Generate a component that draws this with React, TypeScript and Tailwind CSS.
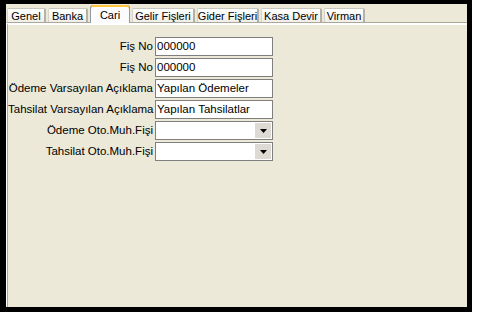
const tabs: { title: string; w: string }[] = [
  { title: "Genel", w: "w-[39px]" },
  { title: "Banka", w: "w-[40px]" },
  { title: "Cari", w: "w-[40px]" },
  { title: "Gelir Fişleri", w: "w-[63px]" },
  { title: "Gider Fişleri", w: "w-[62px]" },
  { title: "Kasa Devir", w: "w-[61px]" },
  { title: "Virman", w: "w-[41px]" },
];

const rows: { label: string; value?: string; combo?: boolean }[] = [
  { label: "Fiş No", value: "000000" },
  { label: "Fiş No", value: "000000" },
  { label: "Ödeme Varsayılan Açıklama", value: "Yapılan Ödemeler" },
  { label: "Tahsilat Varsayılan Açıklama", value: "Yapılan Tahsilatlar" },
  { label: "Ödeme Oto.Muh.Fişi", combo: true },
  { label: "Tahsilat Oto.Muh.Fişi", combo: true },
];

function Tab({ title, w, active }: { title: string; w: string; active?: boolean }) {
  if (active) {
    return (
      <div
        className={`${w} relative z-10 h-[18px] -mb-px flex items-center justify-center rounded-t-[3px] border-x border-[#919b9c] bg-[#fcfcfe] shadow-[inset_0_2px_0_#ffc83c,inset_0_1px_0_#e68b2c] pt-[2px] whitespace-nowrap text-[11px]`}
      >
        {title}
      </div>
    );
  }
  return (
    <div
      className={`${w} h-[14px] flex items-center justify-center rounded-t-[2px] border-t border-l border-t-[#c8c8c0] border-l-[#d6d4ca] border-r-2 border-r-[#b4b2a8] bg-gradient-to-b from-white to-[#efeee8] leading-none pt-[1px] whitespace-nowrap text-[11px]`}
    >
      {title}
    </div>
  );
}

function Field({ value, combo }: { value?: string; combo?: boolean }) {
  return (
    <div className="h-[19px] w-[118px] bg-white border border-[#7f7f7f] flex items-center">
      <span className="flex-1 pl-px leading-none">{value}</span>
      {combo && (
        <div className="h-[15px] w-[16px] mr-px bg-[#dcdad3] flex items-center justify-center">
          <svg width="7" height="4" viewBox="0 0 7 4">
            <path d="M0 0h7L3.5 4z" fill="#000" />
          </svg>
        </div>
      )}
    </div>
  );
}

export default function App() {
  return (
    <div className="w-[477px] h-[316px] bg-white font-['Liberation_Sans',Arial,sans-serif] text-[11.5px] text-black">
      <div className="w-[472px] h-[312px] border-t-4 border-l-[6px] border-r-[5px] border-b-[5px] border-black bg-[#ece9d8] flex flex-col overflow-hidden">
        <div className="h-[18px] flex items-end gap-[2px] pl-px">
          {tabs.map((t) => (
            <Tab key={t.title} title={t.title} w={t.w} active={t.title === "Cari"} />
          ))}
        </div>
        <div className="flex-1 border-t border-t-[#aca899] border-l border-l-white">
          <div className="h-full border-t-2 border-t-white border-l border-l-[#aca899] pt-[12px]">
            <div className="grid grid-cols-[145px_118px] gap-x-[2px] gap-y-[2px] items-center">
              {rows.map((r, i) => (
                <div key={i} className="contents">
                  <div className="text-right whitespace-nowrap leading-none">{r.label}</div>
                  <Field value={r.value} combo={r.combo} />
                </div>
              ))}
            </div>
          </div>
        </div>
      </div>
    </div>
  );
}
